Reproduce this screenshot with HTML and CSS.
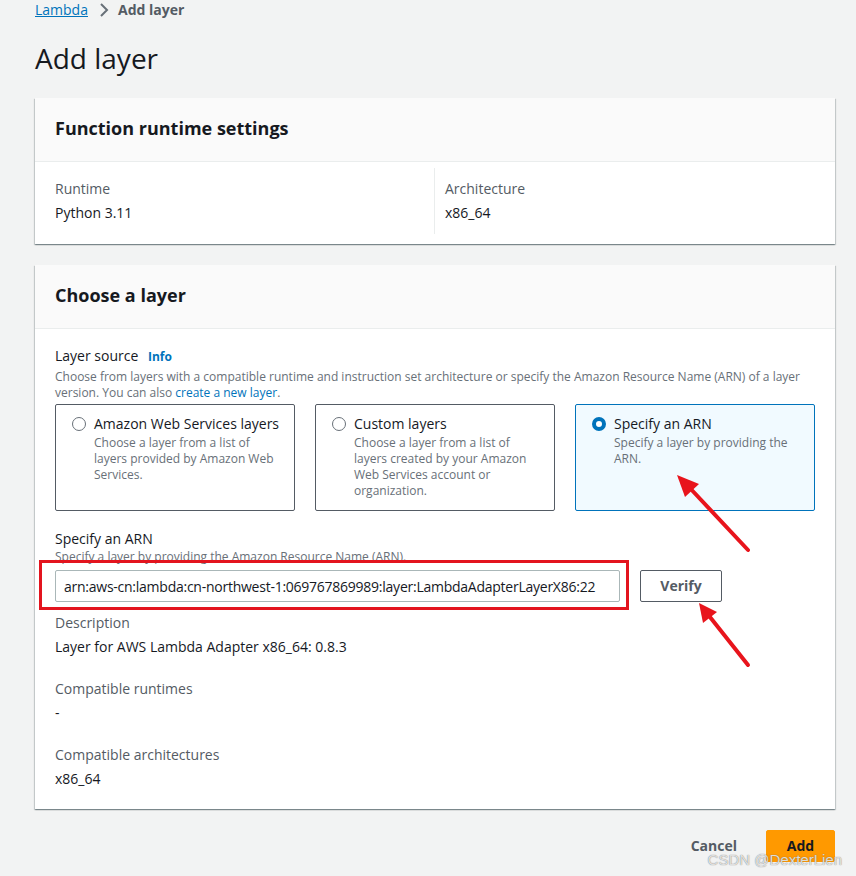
FILE: index.html
```html
<!DOCTYPE html>
<html lang="en">
<head>
  <meta charset="UTF-8" />
  <title>Add layer</title>
  <link rel="stylesheet" href="styles.css">
</head>
<body>
  <div class="page">
    <div class="breadcrumb">
      <a href="#" class="crumb-link">Lambda</a>
      <svg class="chevron" width="16" height="16" viewBox="0 0 16 16"><path d="M5 2l6 6-6 6" fill="none" stroke="#687078" stroke-width="2"/></svg>
      <span class="crumb-current">Add layer</span>
    </div>
    <h1 class="title">Add layer</h1>

    <div class="card">
      <div class="card-header">Function runtime settings</div>
      <div class="card-body columns">
        <div class="col">
          <div class="label">Runtime</div>
          <div class="value">Python 3.11</div>
        </div>
        <div class="col col-right">
          <div class="label">Architecture</div>
          <div class="value">x86_64</div>
        </div>
      </div>
    </div>

    <div class="card">
      <div class="card-header">Choose a layer</div>
      <div class="card-body layer-body">
        <div class="field-label">Layer source <a href="#" class="info">Info</a></div>
        <div class="hint">Choose from layers with a compatible runtime and instruction set architecture or specify the Amazon Resource Name (ARN) of a layer version. You can also <a href="#" class="link">create a new layer</a>.</div>
        <div class="tiles">
          <div class="tile">
            <span class="radio"></span>
            <div>
              <div class="tile-title">Amazon Web Services layers</div>
              <div class="tile-desc">Choose a layer from a list of layers provided by Amazon Web Services.</div>
            </div>
          </div>
          <div class="tile">
            <span class="radio"></span>
            <div>
              <div class="tile-title">Custom layers</div>
              <div class="tile-desc">Choose a layer from a list of layers created by your Amazon Web Services account or organization.</div>
            </div>
          </div>
          <div class="tile selected">
            <span class="radio checked"></span>
            <div>
              <div class="tile-title">Specify an ARN</div>
              <div class="tile-desc">Specify a layer by providing the ARN.</div>
            </div>
          </div>
        </div>

        <div class="field-label arn-label">Specify an ARN</div>
        <div class="hint arn-hint">Specify a layer by providing the Amazon Resource Name (ARN).</div>
        <div class="arn-row">
          <div class="input-wrap">
            <input class="input" type="text" value="arn:aws-cn:lambda:cn-northwest-1:069767869989:layer:LambdaAdapterLayerX86:22">
          </div>
          <button class="btn-normal">Verify</button>
        </div>

        <div class="kv">
          <div class="label">Description</div>
          <div class="value">Layer for AWS Lambda Adapter x86_64: 0.8.3</div>
        </div>
        <div class="kv">
          <div class="label">Compatible runtimes</div>
          <div class="value">-</div>
        </div>
        <div class="kv">
          <div class="label">Compatible architectures</div>
          <div class="value">x86_64</div>
        </div>
      </div>
    </div>

    <div class="actions">
      <button class="btn-link">Cancel</button>
      <button class="btn-primary">Add</button>
    </div>

    <svg class="arrows" width="856" height="876" viewBox="0 0 856 876">
      <line x1="748" y1="550" x2="688" y2="486" stroke="#e8141c" stroke-width="4" stroke-linecap="round"/>
      <polygon points="677,475 699,484 685,497" fill="#e8141c"/>
      <line x1="748" y1="665" x2="706" y2="612" stroke="#e8141c" stroke-width="4" stroke-linecap="round"/>
      <polygon points="699,603 717,612 703,623" fill="#e8141c"/>
    </svg>
    <div class="watermark">CSDN @DexterLien</div>
  </div>
</body>
</html>
```

FILE: styles.css
```css
body {
  margin: 0;
  background: #f2f3f3;
  font-family: "Open Sans", "Noto Sans", sans-serif;
  color: #16191f;
  font-size: 14px;
  line-height: 20px;
}
.page {
  position: relative;
  width: 800px;
  padding: 0 21px 0 35px;
  height: 876px;
  overflow: hidden;
}
.breadcrumb {
  display: flex;
  align-items: center;
  height: 20px;
}
.crumb-link {
  color: #0073bb;
  text-decoration: underline;
}
.chevron {
  margin: 0 6px 0 8px;
}
.crumb-current {
  color: #545b64;
  font-weight: bold;
}
.title {
  margin: 20px 0 22px;
  font-size: 28px;
  line-height: 36px;
  font-weight: normal;
}
.card {
  background: #fff;
  box-shadow: 0 1px 1px 0 rgba(0, 28, 36, 0.3), 1px 1px 1px 0 rgba(0, 28, 36, 0.15), -1px 1px 1px 0 rgba(0, 28, 36, 0.15);
  margin-bottom: 21px;
}
.card-header {
  background: #fafafa;
  border-bottom: 1px solid #eaeded;
  padding: 19px 20px 22px;
  font-size: 18px;
  line-height: 22px;
  font-weight: bold;
}
.card-body {
  padding: 6px 20px 10px;
}
.columns {
  display: grid;
  grid-template-columns: 379px 1fr;
}
.col {
  padding: 11px 0;
}
.col-right {
  border-left: 1px solid #eaeded;
  padding-left: 10px;
}
.label {
  color: #545b64;
  margin-bottom: 4px;
}
.layer-body {
  padding: 17px 20px 20px;
}
.field-label {
  color: #16191f;
}
.info {
  color: #0073bb;
  font-weight: bold;
  font-size: 12px;
  text-decoration: none;
  margin-left: 6px;
}
.hint {
  font-size: 12px;
  line-height: 16px;
  color: #687078;
  margin-top: 2px;
}
.arn-hint {
  margin-top: 0;
}
.link {
  color: #0073bb;
  text-decoration: none;
}
.tiles {
  display: grid;
  grid-template-columns: repeat(3, 1fr);
  gap: 20px;
  margin-top: 3px;
}
.tile {
  display: flex;
  gap: 8px;
  border: 1px solid #545b64;
  border-radius: 2px;
  padding: 9px 14px 12px 16px;
  box-sizing: border-box;
  height: 107px;
}
.tile.selected {
  border-color: #0073bb;
  background: #f1faff;
}
.radio {
  flex: none;
  width: 14px;
  height: 14px;
  box-sizing: border-box;
  border: 1px solid #687078;
  border-radius: 50%;
  margin-top: 3px;
  background: #fff;
}
.radio.checked {
  border: 4px solid #0073bb;
}
.tile-desc {
  font-size: 12px;
  line-height: 16px;
  color: #687078;
  margin-top: 1px;
}
.arn-label {
  margin-top: 18px;
}
.arn-row {
  display: flex;
  gap: 20px;
  margin-top: 5px;
}
.input-wrap {
  position: relative;
}
.input-wrap::after {
  content: "";
  position: absolute;
  left: -16px;
  top: -10px;
  right: -9px;
  bottom: -8px;
  border: 3px solid #e3141e;
}
.input {
  width: 565px;
  height: 32px;
  box-sizing: border-box;
  border: 1px solid #aab7b8;
  border-radius: 2px;
  padding: 0 8px;
  font: inherit;
  letter-spacing: -0.25px;
  color: #16191f;
  display: block;
}
.btn-normal {
  width: 82px;
  height: 32px;
  background: #fff;
  border: 1px solid #545b64;
  border-radius: 2px;
  color: #545b64;
  font: inherit;
  font-weight: bold;
}
.kv {
  margin-top: 22px;
}
.arn-row + .kv {
  margin-top: 11px;
}
.actions {
  display: flex;
  justify-content: flex-end;
  gap: 9px;
}
.btn-link {
  background: none;
  border: none;
  color: #545b64;
  font: inherit;
  font-weight: bold;
  padding: 0 20px;
}
.btn-primary {
  width: 69px;
  height: 32px;
  background: #ff9900;
  border: 1px solid #ff9900;
  border-radius: 2px;
  color: #16191f;
  font: inherit;
  font-weight: bold;
}
.arrows {
  position: absolute;
  left: 0;
  top: 0;
  pointer-events: none;
}
.watermark {
  position: absolute;
  right: 14px;
  bottom: 6px;
  font-family: "Liberation Sans", sans-serif;
  font-size: 15px;
  color: rgba(255, 255, 255, 0.8);
  text-shadow: 0 0 1px #555;
}
```
